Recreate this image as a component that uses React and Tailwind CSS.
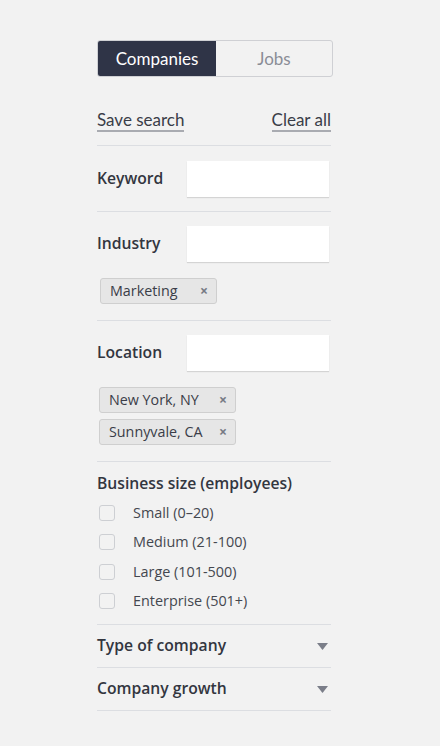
import React from 'react';

const lato = { fontFamily: 'Lato, "Open Sans", sans-serif' };

const Tag = ({ label, width }) => (
  <div className={`flex items-center justify-between h-[26px] ${width} pl-[9px] pr-[8px] bg-[#e6e6e6] border border-[#cfcfcf] rounded-[3px] text-[14.3px] text-[#3a3d48]`}>
    <span>{label}</span>
    <span className="text-[14px] font-bold text-[#777a85] leading-none">×</span>
  </div>
);

const FieldRow = ({ label }) => (
  <div className="flex items-center justify-between">
    <span className="text-[15.7px] font-semibold text-[#33363f] -mt-[1px]">{label}</span>
    <div className="mr-[2px] w-[142px] h-[36px] bg-white shadow-[0_1px_1px_rgba(0,0,0,0.12)]" />
  </div>
);

const Collapse = ({ label }) => (
  <div className="flex items-center justify-between h-[43px] border-b border-[#dcdee2]">
    <span className="text-[15.7px] font-semibold text-[#33363f]">{label}</span>
    <svg width="11" height="7" viewBox="0 0 11 7" className="mr-[3px]">
      <path d="M0 0h11L5.5 7z" fill="#7b7e89" />
    </svg>
  </div>
);

const sizes = ['Small (0–20)', 'Medium (21-100)', 'Large (101-500)', 'Enterprise (501+)'];

export default function App() {
  return (
    <div className="min-h-[746px] w-[440px] bg-[#f2f2f2]" style={{ fontFamily: '"Open Sans", sans-serif' }}>
      <div className="ml-[97px] w-[234px] pt-[40px]">
        <div className="flex h-[37px] w-[236px] rounded-[3px] border border-[#cfd0d4] overflow-hidden text-[17px]" style={lato}>
          <div className="w-[118px] bg-[#2f3447] text-white flex items-center justify-center">Companies</div>
          <div className="flex-1 text-[#8a8d96] flex items-center justify-center">Jobs</div>
        </div>

        <div className="flex justify-between mt-[33px] pb-[13px] border-b border-[#dcdee2] text-[17px] text-[#3a3d48]" style={lato}>
          <span className="border-b-2 border-[#a9abb1] leading-[20px]">Save search</span>
          <span className="border-b-2 border-[#a9abb1] leading-[20px]">Clear all</span>
        </div>

        <div className="pt-[15px] pb-[14px] border-b border-[#dcdee2]">
          <FieldRow label="Keyword" />
        </div>

        <div className="pt-[14px] pb-[16px] border-b border-[#dcdee2]">
          <FieldRow label="Industry" />
          <div className="mt-[16px] ml-[3px]">
            <Tag label="Marketing" width="w-[117px]" />
          </div>
        </div>

        <div className="pt-[14px] pb-[16px] border-b border-[#dcdee2]">
          <FieldRow label="Location" />
          <div className="mt-[16px] ml-[2px] flex flex-col gap-[6px]">
            <Tag label="New York, NY" width="w-[137px]" />
            <Tag label="Sunnyvale, CA" width="w-[137px]" />
          </div>
        </div>

        <div className="pt-[10px] pb-[8px] border-b border-[#dcdee2]">
          <div className="text-[15.7px] leading-[22px] font-semibold text-[#33363f]">Business size (employees)</div>
          <div className="mt-[4px] flex flex-col">
            {sizes.map((s) => (
              <label key={s} className="flex items-center h-[29.5px]">
                <span className="ml-[2px] w-[16px] h-[16px] border border-[#cdcfd3] rounded-[3px] bg-[#f2f2f2]" />
                <span className="ml-[18px] text-[14.4px] text-[#44474f]">{s}</span>
              </label>
            ))}
          </div>
        </div>

        <Collapse label="Type of company" />
        <Collapse label="Company growth" />
      </div>
    </div>
  );
}
